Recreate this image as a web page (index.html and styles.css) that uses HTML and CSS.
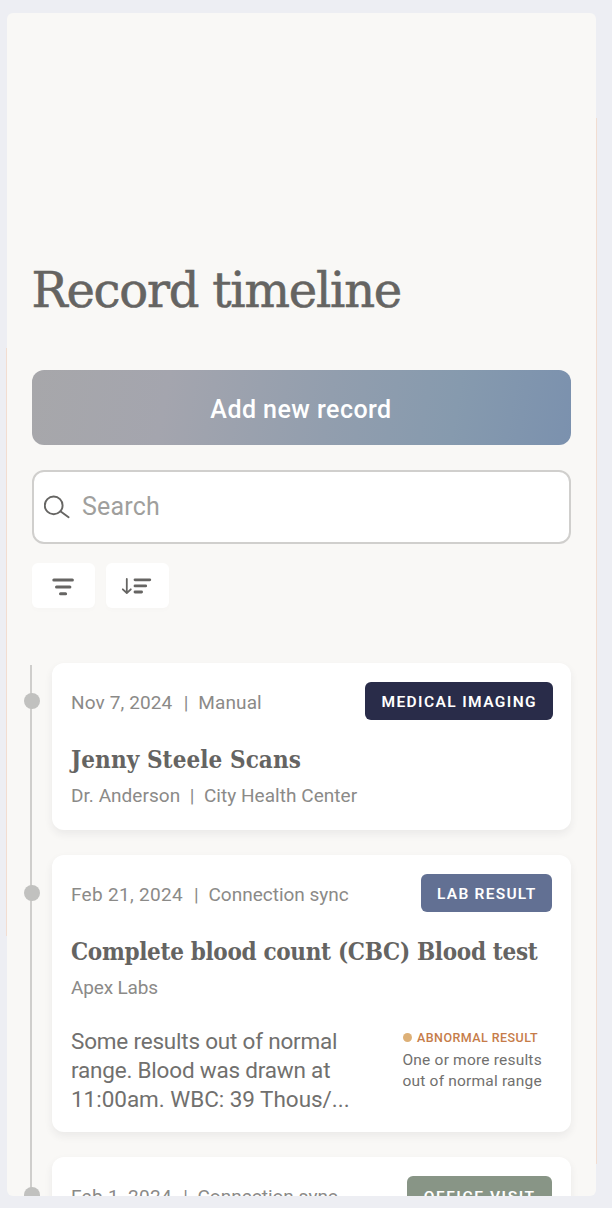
FILE: index.html
```html
<!DOCTYPE html>
<html lang="en">
<head>
<meta charset="utf-8">
<title>Record timeline</title>
<link rel="stylesheet" href="styles.css">
</head>
<body>
<main class="screen">
  <h1 class="title"><span>Record timeline</span></h1>
  <button class="add"><span>Add new record</span></button>
  <div class="search">
    <svg class="search-icon" width="28" height="26" viewBox="0 0 28 26" fill="none" stroke="#666563" stroke-width="1.9" stroke-linecap="round"><circle cx="9.7" cy="11.4" r="8.9"/><path d="M16.4 17.3L24.6 23.2"/></svg>
    <span class="placeholder">Search</span>
  </div>
  <div class="tools">
    <button class="tool"><svg width="62" height="46" viewBox="0 0 62 46" fill="none" stroke="#666563" stroke-width="3" stroke-linecap="round"><path d="M21.8 16.9H40.4M24.5 23.9H37.9M28.5 30.7H33.6"/></svg></button>
    <button class="tool"><svg width="62" height="46" viewBox="0 0 62 46" fill="none" stroke="#666563" stroke-linecap="round" stroke-linejoin="round"><path stroke-width="2.8" d="M29 16.8H43.8M29 22.9H39.7M29 29H35.6"/><path stroke-width="1.8" d="M20.8 16V29.5M16.8 26.3L20.8 30L24.8 26.3"/></svg></button>
  </div>
  <section class="timeline">
    <article class="card">
      <i class="dot"></i>
      <header class="top"><p class="meta date-a">Nov 7, 2024 <span class="sep">|</span> Manual</p><span class="tag imaging"><b>MEDICAL IMAGING</b></span></header>
      <h2 class="name name-a">Jenny Steele Scans</h2>
      <p class="meta source-a">Dr. Anderson &nbsp;|&nbsp; City Health Center</p>
    </article>
    <article class="card card-lab">
      <i class="dot"></i>
      <header class="top"><p class="meta date-b"><span class="day">Feb 21, 2024</span> <span class="sep">|</span> Connection sync</p><span class="tag lab"><b>LAB RESULT</b></span></header>
      <h2 class="name name-b">Complete blood count (CBC) Blood test</h2>
      <p class="meta source-b">Apex Labs</p>
      <div class="details">
        <p class="summary">Some results out of normal<br>range. Blood was drawn at<br><span class="last-line">11:00am. WBC: 39 Thous/...</span></p>
        <div class="alert"><p class="alert-title"><i></i><span>ABNORMAL RESULT</span></p><p class="alert-text">One or more results<br>out of normal range</p></div>
      </div>
    </article>
    <article class="card card-visit">
      <i class="dot"></i>
      <header class="top"><p class="meta date-c"><span class="day">Feb 1, 2024</span> <span class="sep">|</span> Connection sync</p><span class="tag visit"><b>OFFICE VISIT</b></span></header>
    </article>
  </section>
</main>
<i class="edge edge-left"></i><i class="edge edge-right"></i>
</body>
</html>
```
FILE: styles.css
```css
* { box-sizing: border-box; }
body { margin: 0; width: 612px; height: 1208px; padding: 12.5px 16px 12px 6.5px; overflow: hidden; position: relative; background: #edeef3; font-family: Roboto, "Noto Sans", sans-serif; }
h1, h2, p { margin: 0; font-weight: 400; white-space: nowrap; }
button { border: 0; padding: 0; font: inherit; }
.screen { height: 1183.5px; overflow: hidden; border-radius: 6px; background: #f9f8f6; padding: 247px 25.5px 0 25px; }
.title { height: 64px; line-height: 60px; font-family: "DejaVu Serif", serif; font-size: 48px; letter-spacing: -1.22px; color: #656462; padding-left: 0; -webkit-text-stroke: .6px #656462; }
.add { display: flex; width: 539px; height: 75px; margin-top: 46.5px; align-items: center; justify-content: center; border-radius: 12px; color: #fff; font-size: 25px; font-weight: 500; letter-spacing: .45px; background: linear-gradient(100deg, #a7a7aa 0%, #a4a5ae 25%, #929eae 55%, #869aae 78%, #7b91ae 100%); padding-top: 3px; }
.search { display: flex; align-items: center; width: 539px; height: 74px; margin-top: 25px; padding-left: 10px; border: 2px solid #d0cfcd; border-radius: 12px; background: #fff; }
.placeholder { margin: -2px 0 0 10.5px; color: #a09f9d; font-size: 25px; letter-spacing: .2px; }
.tools { display: flex; gap: 11px; margin-top: 18.5px; }
.tool { width: 63px; height: 45.5px; border-radius: 6px; background: #fff; box-shadow: 0 3px 5px #00000003; }
.tool svg { display: block; }
.timeline { position: relative; display: flex; flex-direction: column; gap: 25px; margin-top: 54.5px; padding-left: 20.5px; }
.timeline::before { content: ""; position: absolute; left: -1.5px; top: 2px; width: 2px; height: 534px; background: #cfcecc; }
.card { position: relative; height: 167px; border-radius: 12px; background: #fff; padding: 19px 18px 0 19px; box-shadow: 0 4px 9px #2f293912; }
.card-lab { height: 277px; }
.card-visit { height: 167px; }
.dot { position: absolute; left: -28.5px; top: 30px; width: 16px; height: 16px; border-radius: 50%; background: #c1c1bf; }
.top { display: flex; justify-content: space-between; height: 38px; }
.meta { color: #8b8a88; font-size: 19px; line-height: 26px; }
.top .meta { margin-top: 8px; }
.sep { margin: 0 5px 0 6.5px; }
.date-a { letter-spacing: .12px; }
.date-b, .date-c { letter-spacing: 0; }
.day { letter-spacing: .3px; }
.source-a { letter-spacing: .04px; }
.source-b { letter-spacing: -.15px; }
.tag { height: 38px; border-radius: 6px; color: #fff; display: flex; align-items: center; justify-content: center; font-size: 15.5px; letter-spacing: 1.25px; padding: 2.5px 0 0 1.5px; }
.tag b { font-weight: 600; }
.imaging { width: 188px; background: #292c49; letter-spacing: 1.4px; }
.lab { width: 131px; margin-right: 1px; background: #627093; }
.visit { width: 145px; margin-right: 1px; background: #889586; padding-top: 4px; letter-spacing: 1.6px; }
.name { margin-top: 23px; height: 40px; line-height: 34px; font-family: "DejaVu Serif Condensed", "DejaVu Serif", serif; font-stretch: condensed; font-weight: 700; font-size: 24px; color: #656462; }
.name-a { letter-spacing: .08px; }
.name-b { letter-spacing: -.33px; }
.details { display: flex; margin-top: 26px; justify-content: space-between; }
.summary { color: #71706e; font-size: 22.5px; line-height: 29px; letter-spacing: -.2px; }
.last-line { letter-spacing: -.03px; }
.alert { width: 150px; margin-top: 3px; }
.alert-title { display: flex; align-items: center; gap: 5px; height: 16px; color: #c67c49; font-size: 12.5px; font-weight: 500; letter-spacing: .45px; }
.alert-title i { width: 9.5px; height: 9.5px; border-radius: 50%; background: #ddb077; }
.alert-text { color: #71706e; font-size: 15.5px; line-height: 21px; margin-top: 4px; letter-spacing: .2px; }
.edge { position: absolute; width: 1px; background: #f2ddd1; }
.edge-left { left: 6px; top: 348px; height: 588px; }
.edge-right { left: 596px; top: 118px; height: 1046px; }
```
